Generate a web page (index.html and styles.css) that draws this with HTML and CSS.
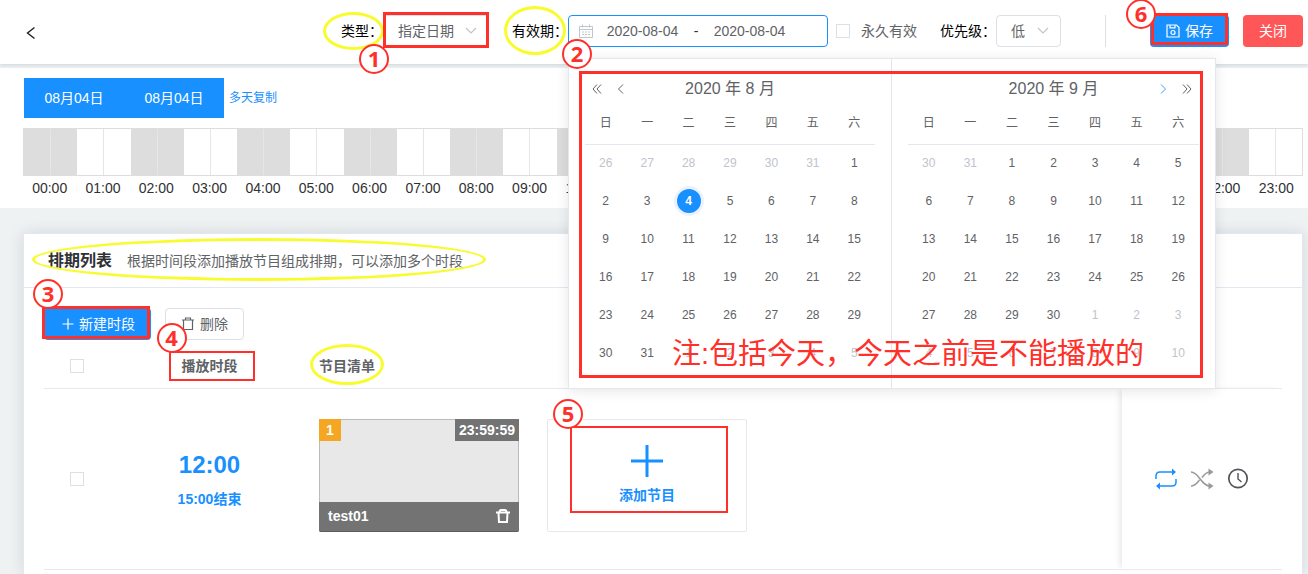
FILE: index.html
```html
<!DOCTYPE html>
<html lang="zh-CN">
<head>
<meta charset="utf-8">
<title>排期列表</title>
<link rel="stylesheet" href="styles.css">
</head>
<body>
<header class="topbar">
  <button class="back" type="button" aria-label="返回"><svg width="10" height="14" viewBox="0 0 10 14"><path d="M8.500 1.500 1.500 7l7 5.500" fill="none" stroke="#222" stroke-width="1.400"/></svg></button>

  <div class="field">
    <label class="field-label" for="type">类型：<i class="oval oval-type"></i></label>
    <div class="select-wrap select-type">
      <select id="type"><option>指定日期</option></select>
      <svg class="caret" width="12" height="8" viewBox="0 0 12 8"><path d="M1 1l5 5 5-5" fill="none" stroke="#c0c4cc" stroke-width="1.200"/></svg>
      <i class="box box-type"></i><b class="num num-1">1</b>
    </div>
  </div>

  <div class="field field-valid">
    <label class="field-label" for="start">有效期：<i class="oval oval-valid"></i></label>
    <div class="range">
      <svg class="range-icon" width="14" height="14" viewBox="0 0 14 14"><path d="M.5 2.500h13v11H.5zM.5 5.500h13M3.500.5v3M10.500.5v3M3 8h2M6 8h2M9 8h2M3 10.500h2M6 10.500h2M9 10.500h2" fill="none" stroke="#c0c4cc"/></svg>
      <input id="start" type="text" value="2020-08-04" aria-label="开始日期">
      <span class="range-sep">-</span>
      <input type="text" value="2020-08-04" aria-label="结束日期">
      <div class="picker">
        <section class="month">
          <div class="month-head">
            <div class="nav">
              <button type="button" aria-label="上一年"><svg width="12" height="12" viewBox="0 0 12 12"><path d="M6 1.500 2 6l4 4.500M10 1.500 6 6l4 4.500"/></svg></button>
              <button type="button" aria-label="上个月"><svg width="12" height="12" viewBox="0 0 12 12"><path d="M8 1.500 3.500 6 8 10.500"/></svg></button>
            </div>
            <span class="month-name">2020 年 8 月</span>
          </div>
          <table class="days">
            <thead><tr><th>日</th><th>一</th><th>二</th><th>三</th><th>四</th><th>五</th><th>六</th></tr></thead>
            <tbody>
              <tr><td class="off">26</td><td class="off">27</td><td class="off">28</td><td class="off">29</td><td class="off">30</td><td class="off">31</td><td>1</td></tr>
              <tr><td>2</td><td>3</td><td><span class="today">4</span></td><td>5</td><td>6</td><td>7</td><td>8</td></tr>
              <tr><td>9</td><td>10</td><td>11</td><td>12</td><td>13</td><td>14</td><td>15</td></tr>
              <tr><td>16</td><td>17</td><td>18</td><td>19</td><td>20</td><td>21</td><td>22</td></tr>
              <tr><td>23</td><td>24</td><td>25</td><td>26</td><td>27</td><td>28</td><td>29</td></tr>
              <tr><td>30</td><td>31</td><td class="off">1</td><td class="off">2</td><td class="off">3</td><td class="off">4</td><td class="off">5</td></tr>
            </tbody>
          </table>
        </section>
        <section class="month">
          <div class="month-head">
            <span class="month-name">2020 年 9 月</span>
            <div class="nav nav-next">
              <button class="active" type="button" aria-label="下个月"><svg width="12" height="12" viewBox="0 0 12 12"><path d="M4 1.500 8.500 6 4 10.500"/></svg></button>
              <button type="button" aria-label="下一年"><svg width="12" height="12" viewBox="0 0 12 12"><path d="M2 1.500 6 6l-4 4.500M6 1.500 10 6l-4 4.500"/></svg></button>
            </div>
          </div>
          <table class="days">
            <thead><tr><th>日</th><th>一</th><th>二</th><th>三</th><th>四</th><th>五</th><th>六</th></tr></thead>
            <tbody>
              <tr><td class="off">30</td><td class="off">31</td><td>1</td><td>2</td><td>3</td><td>4</td><td>5</td></tr>
              <tr><td>6</td><td>7</td><td>8</td><td>9</td><td>10</td><td>11</td><td>12</td></tr>
              <tr><td>13</td><td>14</td><td>15</td><td>16</td><td>17</td><td>18</td><td>19</td></tr>
              <tr><td>20</td><td>21</td><td>22</td><td>23</td><td>24</td><td>25</td><td>26</td></tr>
              <tr><td>27</td><td>28</td><td>29</td><td>30</td><td class="off">1</td><td class="off">2</td><td class="off">3</td></tr>
              <tr><td class="off">4</td><td class="off">5</td><td class="off">6</td><td class="off">7</td><td class="off">8</td><td class="off">9</td><td class="off">10</td></tr>
            </tbody>
          </table>
        </section>
        <i class="box box-picker"></i>
        <p class="note">注:包括今天，今天之前是不能播放的</p>
      </div>
      <b class="num num-2">2</b>
    </div>
  </div>

  <label class="forever"><input class="check" type="checkbox">永久有效</label>

  <div class="field field-level">
    <label class="field-label" for="level">优先级：</label>
    <div class="select-wrap select-level">
      <select id="level"><option>低</option></select>
      <svg class="caret" width="12" height="8" viewBox="0 0 12 8"><path d="M1 1l5 5 5-5" fill="none" stroke="#c0c4cc" stroke-width="1.200"/></svg>
    </div>
  </div>

  <div class="actions">
    <button class="btn btn-primary btn-save" type="button">
      <svg width="14" height="14" viewBox="0 0 14 14" fill="none" stroke="#fff" stroke-width="1.200"><path d="M1 1h9.500L13 3.500V13H1z"/><path d="M4 1v2.800h5V1"/><circle cx="7" cy="8.500" r="2"/></svg>
      <span>保存</span><i class="box box-save"></i><b class="num num-6">6</b>
    </button>
    <button class="btn btn-danger" type="button">关闭</button>
  </div>
</header>

<section class="schedule">
  <div class="dates">
    <button class="date" type="button">08月04日</button><button class="date" type="button">08月04日</button>
    <a class="copy" href="#">多天复制</a>
  </div>
  <div class="bar">
    <i></i><i></i><i></i><i></i><i></i><i></i><i></i><i></i><i></i><i></i><i></i><i></i><i></i><i></i><i></i><i></i><i></i><i></i><i></i><i></i><i></i><i></i><i></i><i></i>
  </div>
  <div class="hours">
    <span>00:00</span><span>01:00</span><span>02:00</span><span>03:00</span><span>04:00</span><span>05:00</span><span>06:00</span><span>07:00</span><span>08:00</span><span>09:00</span><span>10:00</span><span>11:00</span><span>12:00</span><span>13:00</span><span>14:00</span><span>15:00</span><span>16:00</span><span>17:00</span><span>18:00</span><span>19:00</span><span>20:00</span><span>21:00</span><span>22:00</span><span>23:00</span>
  </div>
</section>

<main class="card">
  <div class="card-head">
    <div class="card-title">
      <h1>排期列表</h1>
      <p>根据时间段添加播放节目组成排期，可以添加多个时段</p>
      <i class="oval oval-title"></i>
    </div>
  </div>
  <div class="card-body">
    <div class="tools">
      <button class="btn btn-primary btn-new" type="button">
        <svg width="12" height="12" viewBox="0 0 12 12"><path d="M6 .5v11M.5 6h11" stroke="#fff" stroke-width="1.200"/></svg>
        <span>新建时段</span><i class="box box-new"></i><b class="num num-3">3</b>
      </button>
      <button class="btn btn-plain" type="button">
        <svg width="14" height="14" viewBox="-1 0 14 14" fill="none" stroke="#606266" stroke-width="1.200"><path d="M0 3h12M3.500 3V1h5v2M1.500 3v9.500h9V3"/></svg>
        <span>删除</span>
      </button>
    </div>
    <table class="list">
      <colgroup><col class="c-check"><col class="c-time"><col><col class="c-ops"></colgroup>
      <thead>
        <tr>
          <th><input class="check" type="checkbox" aria-label="全选"></th>
          <th><span class="host">播放时段<i class="box box-time"></i><b class="num num-4">4</b></span></th>
          <th class="left"><span class="host">节目清单<i class="oval oval-list"></i></span></th>
          <th></th>
        </tr>
      </thead>
      <tbody>
        <tr>
          <td><input class="check" type="checkbox" aria-label="选择时段"></td>
          <td class="time"><strong>12:00</strong><span>15:00结束</span></td>
          <td class="shows">
            <div class="show-row">
              <article class="show">
                <div class="show-top"><span class="order">1</span><span class="length">23:59:59</span></div>
                <div class="show-foot"><span>test01</span>
                  <button type="button" aria-label="删除节目"><svg width="14" height="14" viewBox="0 0 14 14" fill="none" stroke="#fff" stroke-width="2"><path d="M0 3.500h14M3.500 3.500Q3.500 1 5 1h4q1.500 0 1.500 2.500M2.500 3.500 3 13h8l.5-9.500"/></svg></button>
                </div>
              </article>
              <button class="add" type="button">
                <svg width="32" height="32" viewBox="0 0 32 32"><path d="M16 0v32M0 16h32" stroke="#1890ff" stroke-width="3"/></svg>
                <span>添加节目</span>
                <i class="box box-add"></i><b class="num num-5">5</b>
              </button>
            </div>
          </td>
          <td class="ops">
            <div class="op-row">
              <button type="button" aria-label="循环"><svg width="24" height="24" viewBox="0 0 24 24"><path d="M2 12V9q0-4 4-4h13M22 12v3q0 4-4 4H5" fill="none" stroke="#1890ff" stroke-width="1.500"/><path d="M18 1.500 22 5l-4 3.500zM6 15.500 2 19l4 3.500z" fill="#1890ff"/></svg></button>
              <button type="button" aria-label="随机"><svg width="24" height="24" viewBox="0 0 24 24"><path d="M1 5c8 0 10 14 19 14M1 19c4 0 6-3 8.500-6M12 10.500C14.500 7.500 16 5 20 5" fill="none" stroke="#999" stroke-width="1.600"/><path d="M18.500 1.500 23.500 5l-5 3.500zM18.500 15.500l5 3.500-5 3.500z" fill="#999"/></svg></button>
              <button type="button" aria-label="定时"><svg width="24" height="24" viewBox="0 0 24 24" fill="none" stroke="#505256"><circle cx="12" cy="11.500" r="9.200" stroke-width="1.700"/><path d="M12 6v6l3.500 3" stroke-width="1.400"/></svg></button>
            </div>
          </td>
        </tr>
      </tbody>
    </table>
  </div>
</main>
</body>
</html>
```
FILE: styles.css
```css
* { box-sizing: border-box; }

body {
  margin: 0;
  min-height: 100vh;
  display: flex;
  flex-direction: column;
  background: #eef2f3;
  color: #606266;
  font: 14px/20px "Liberation Sans", "Noto Sans CJK SC", sans-serif;
}

button, input, select { font: inherit; color: inherit; }
button { padding: 0; border: 0; background: none; cursor: pointer; }
svg { display: block; flex: none; }
h1, p { margin: 0; }

/* top bar */
.topbar {
  position: relative;
  z-index: 2;
  display: flex;
  align-items: center;
  height: 64px;
  padding: 0 5px 2px 26px;
  background: #fff;
  box-shadow: 0 1px 4px rgba(0, 21, 41, .14);
  margin-bottom: 4px;
}
.back { margin-right: auto; padding-top: 4px; }
.field { display: flex; align-items: center; }
.field-label { position: relative; color: #000; white-space: nowrap; }
.field-valid { margin-left: 23px; }
.field-level { margin-left: 23px; }

.select-wrap { position: relative; height: 32px; }
.select-type { width: 106px; }
.select-level { width: 65px; }
.select-wrap select {
  appearance: none;
  width: 100%;
  height: 100%;
  padding: 0 14px;
  border: 1px solid #dcdfe6;
  border-radius: 4px;
  background: #fff;
  outline: 0;
}
.caret { position: absolute; right: 12px; top: 12px; pointer-events: none; }

.range {
  position: relative;
  display: flex;
  align-items: center;
  width: 260px;
  height: 32px;
  padding: 0 28px 0 10px;
  border: 1px solid #1890ff;
  border-radius: 4px;
  background: #fff;
}
.range input {
  flex: 1;
  min-width: 0;
  padding: 0;
  border: 0;
  outline: 0;
  background: none;
  text-align: center;
}
.range-sep { width: 8px; text-align: center; color: #303133; }

.check {
  appearance: none;
  display: block;
  flex: none;
  width: 14px;
  height: 14px;
  margin: 0;
  border: 1px solid #dcdfe6;
  background: #fff;
}
.forever { display: flex; align-items: center; gap: 11px; margin-left: 8px; white-space: nowrap; }

.actions {
  display: flex;
  gap: 14px;
  margin-left: 44px;
  padding-left: 44px;
  border-left: 1px solid #dcdfe6;
}
.btn {
  position: relative;
  display: flex;
  align-items: center;
  justify-content: center;
  height: 32px;
  padding: 0 15px;
  border: 1px solid transparent;
  border-radius: 4px;
  white-space: nowrap;
}
.btn svg { margin-right: 5px; }
.btn-primary { background: #1890ff; color: #fff; }
.btn-danger { background: #ff5757; color: #fff; }
.btn-plain { border-color: #dcdfe6; background: #fff; }

/* date range picker */
.picker {
  position: absolute;
  z-index: 3;
  left: -1px;
  top: 42px;
  display: grid;
  grid-template-columns: 1fr 1fr;
  width: 648px;
  border: 1px solid #e4e7ed;
  background: #fff;
  box-shadow: 0 2px 12px rgba(0, 0, 0, .1);
}
.month { padding: 16px; }
.month:first-child { border-right: 1px solid #e4e4ea; }
.month-head {
  position: relative;
  display: flex;
  align-items: center;
  justify-content: center;
  height: 28px;
}
.month-name { font-size: 16px; }
.nav { position: absolute; left: 6px; display: flex; gap: 12px; }
.nav-next { left: auto; right: 6px; }
.nav svg { fill: none; stroke: #606266; }
.nav .active svg { stroke: #409eff; }
.days {
  width: 100%;
  table-layout: fixed;
  border-collapse: collapse;
  font-size: 12px;
  text-align: center;
}
.days th { height: 41px; padding: 0; border-bottom: 1px solid #e4e7ed; font-weight: 400; }
.days td { height: 38px; padding: 0; }
.days .off { color: #c0c4cc; }
.today {
  display: block;
  width: 24px;
  margin: 0 auto;
  border-radius: 50%;
  background: #1890ff;
  box-shadow: 0 0 0 3px #ecf1fe;
  color: #fff;
  font-weight: 700;
  line-height: 24px;
}
.note {
  position: absolute;
  left: 103px;
  top: 275px;
  color: #ff3029;
  font-size: 29px;
  line-height: 40px;
  white-space: nowrap;
}

/* day timeline */
.schedule { padding: 10px 5px 10px 23px; background: #fff; }
.dates { display: flex; align-items: center; padding-left: 1px; margin-bottom: 10px; }
.date { width: 100px; height: 40px; background: #1890ff; color: #fff; }
.copy { margin-left: 5px; color: #1890ff; font-size: 12px; text-decoration: none; }
.bar { display: flex; height: 48px; border: 1px solid #ddd; }
.bar i {
  flex: 1;
  background: linear-gradient(#e6e6e6, #e6e6e6) center / 1px 100% no-repeat;
}
.bar i:nth-child(odd) { background-color: #ddd; }
.hours { display: flex; padding-top: 2px; color: #303133; }
.hours span { flex: 1 0 0; text-align: center; }

/* schedule list */
.card {
  flex: 1;
  margin: 25px 5px 0 23px;
  border: 1px solid #e4e7f0;
  border-bottom: 0;
  background: #fff;
  box-shadow: 0 0 14px rgba(0, 21, 41, .12);
}
.card-head { display: flex; padding: 16px 24px; border-bottom: 1px solid #e4e7f0; }
.card-title { position: relative; display: flex; align-items: center; gap: 15px; height: 21px; }
.card-title h1 { color: #303133; font-size: 16px; line-height: 21px; }
.card-body { padding: 20px 20px 0; }
.tools { display: flex; gap: 14px; }
.btn-new { padding: 0 15px 0 17px; }

.list { width: 100%; table-layout: fixed; border-collapse: collapse; text-align: center; }
.list th, .list td { padding: 0; border-bottom: 1px solid #e6e9f2; }
.list th { height: 48px; padding-top: 4px; }
.list .check { margin: 0 auto; }
.c-check { width: 66px; }
.c-time { width: 199px; }
.c-ops { width: 160px; }
.list .left { padding-left: 10px; text-align: left; }
.host { position: relative; }
.time { color: #1890ff; font-weight: 700; }
.time strong { display: block; margin-bottom: 8px; font-size: 24px; line-height: 32px; }
.list .shows { padding: 30px 10px 37px; }
.show-row { display: flex; gap: 28px; }
.show {
  display: flex;
  flex-direction: column;
  justify-content: space-between;
  width: 200px;
  height: 113px;
  border: 1px solid #bbb;
  border-radius: 2px;
  background: #e8e8e8;
  color: #fff;
  font-weight: 700;
}
.show-top { display: flex; justify-content: space-between; margin: -1px; line-height: 22px; }
.order { width: 22px; background: #f5a623; }
.length { padding: 0 4px; background: #737373; }
.show-foot {
  display: flex;
  align-items: center;
  justify-content: space-between;
  height: 30px;
  margin: -1px;
  padding: 0 9px;
  border-bottom: 1px solid #5c5c5c;
  border-radius: 0 0 2px 2px;
  background: #737373;
}
.add {
  position: relative;
  display: flex;
  flex-direction: column;
  align-items: center;
  justify-content: center;
  gap: 8px;
  width: 200px;
  height: 113px;
  border: 1px solid #e8e8e8;
  border-radius: 2px;
  color: #1890ff;
  font-weight: 700;
}
.ops { box-shadow: -4px 0 6px -2px rgba(0, 0, 0, .1); }
.op-row { display: flex; justify-content: center; gap: 12px; padding-right: 1px; }

/* guide marks */
.oval, .box, .num { position: absolute; pointer-events: none; }
.oval { border: 3px solid #f8fb2e; border-radius: 50%; }
.oval-type { inset: -9px -1px -9px -18px; }
.oval-valid { inset: -15px 2px -14px -8px; }
.oval-title { inset: -12px -23px -10px -16px; }
.oval-list { inset: -14px -9px -11px; }
.box { border: 3px solid #ff3029; }
.box-type { inset: -3px 0 -1px; }
.box-picker { inset: 12px 12px 10px 10px; }
.box-save { inset: -3px 0 1px; }
.box-new { inset: -3px 0 0 -3px; }
.box-time { inset: -7px -17px -7px -13px; border-width: 2px; }
.box-add { inset: 6px 18px 18px 22px; border-width: 2px; }
.num {
  z-index: 4;
  width: 30px;
  height: 30px;
  border: 2px solid #ff3029;
  border-radius: 50%;
  background: #fff;
  color: #ff3029;
  font: 700 22px/24px "Noto Sans", sans-serif;
  text-align: center;
}
.num-1 { left: -24px; top: 29px; }
.num-2 { left: -7px; top: 23px; }
.num-3 { left: -12px; top: -30px; }
.num-4 { left: -25px; top: -35px; }
.num-5 { left: 5px; top: -21px; }
.num-6 { left: -25px; top: -17px; }
```
